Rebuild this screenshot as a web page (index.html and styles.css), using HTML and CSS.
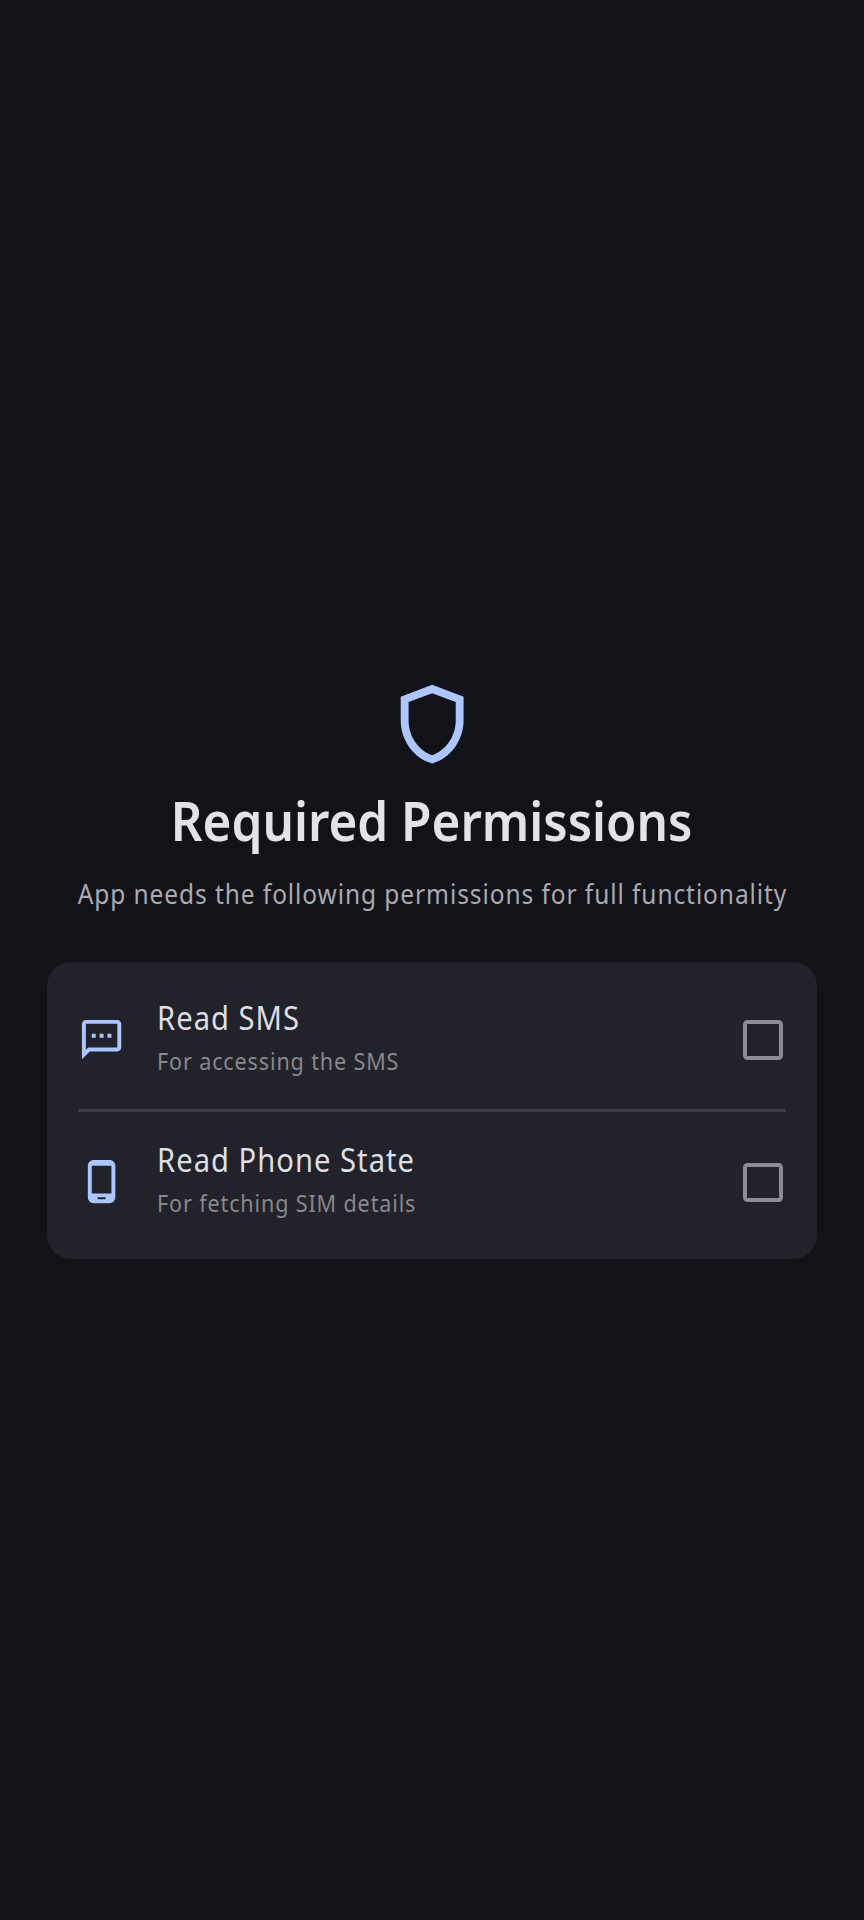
FILE: index.html
```html
<!DOCTYPE html>
<html lang="en">
<head>
<meta charset="utf-8">
<title>Required Permissions</title>
<link rel="stylesheet" href="styles.css">
</head>
<body>
<main class="screen">
  <svg class="shield" viewBox="0 0 24 24"><path d="M12 2L4 5v6.09c0 5.05 3.41 9.76 8 10.91 4.59-1.15 8-5.86 8-10.91V5l-8-3zm6 9.09c0 4-2.55 7.7-6 8.83-3.45-1.13-6-4.82-6-8.83v-4.7l6-2.25 6 2.25v4.7z"/></svg>
  <h1 class="title">Required Permissions</h1>
  <p class="subtitle">App needs the following permissions for full functionality</p>
  <section class="card">
    <label class="row">
      <svg class="icon" viewBox="0 0 24 24"><path d="M20 2H4c-1.1 0-2 .9-2 2v18l4-4h14c1.1 0 2-.9 2-2V4c0-1.1-.9-2-2-2zm0 14H5.17L4 17.17V4h16v12zM7 9h2v2H7zm4 0h2v2h-2zm4 0h2v2h-2z"/></svg>
      <span class="text"><span class="name">Read SMS</span><span class="detail">For accessing the SMS</span></span>
      <input class="check" type="checkbox">
    </label>
    <hr class="divider">
    <label class="row">
      <svg class="icon" viewBox="0 0 24 24"><path d="M16 1H8C6.34 1 5 2.34 5 4v16c0 1.66 1.34 3 3 3h8c1.66 0 3-1.34 3-3V4c0-1.66-1.34-3-3-3zm-2 20h-4v-1h4v1zm3-3H7V4h10v14z"/></svg>
      <span class="text"><span class="name">Read Phone State</span><span class="detail">For fetching SIM details</span></span>
      <input class="check" type="checkbox">
    </label>
  </section>
</main>
</body>
</html>
```
FILE: styles.css
```css
* { box-sizing: border-box; }
body { margin: 0; background: #121318; color: #e2e2e9; font-family: "Noto Sans", sans-serif; }
.screen { height: 1920px; padding: 677px 47px 0; display: flex; flex-direction: column; align-items: center; }
.shield { width: 94.3px; height: 94.3px; flex: none; fill: #adc6ff; }
.title { margin: 13px 0 0; font-size: 54.5px; line-height: 72px; font-weight: 600; white-space: nowrap; transform: scaleX(0.907); }
.subtitle { margin: 18px 0 0; padding-left: 2px; font-size: 27px; line-height: 40px; letter-spacing: 1.03px; color: #aaaab0; white-space: nowrap; transform: scaleX(0.906); }
.card { width: 770px; height: 297px; margin-top: 47.5px; padding: 8px 31px 6px; border-radius: 24px; background: #22222a; display: flex; flex-direction: column; flex: none; }
.row { height: 139.3px; display: flex; align-items: center; }
.icon { width: 47.2px; height: 47.2px; flex: none; fill: #adc6ff; }
.text { flex: 1; margin-left: 31.5px; padding-bottom: 2px; display: flex; flex-direction: column; align-items: flex-start; white-space: nowrap; }
.name, .detail { transform: scaleX(0.91); transform-origin: left; }
.name { font-size: 32px; line-height: 45px; letter-spacing: 1.15px; color: #dedee5; }
.detail { font-size: 23.7px; line-height: 42px; letter-spacing: 0.95px; color: #88888e; }
.divider { width: 100%; height: 3px; margin: 0; border: 0; background: #3d3e47; flex: none; }
.check { appearance: none; width: 39.4px; height: 39.4px; margin: 1px 3.4px 0 0; flex: none; border: 4px solid #8c8c96; border-radius: 4.5px; }
```
